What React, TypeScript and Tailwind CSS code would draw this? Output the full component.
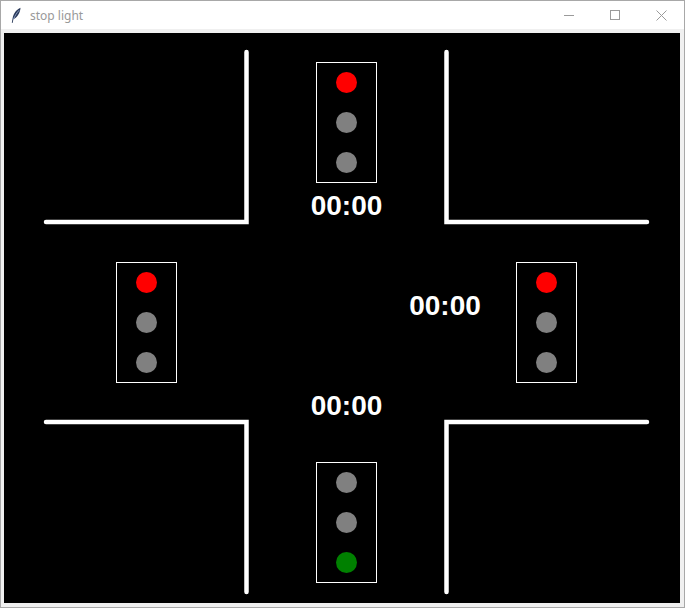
import React from "react";

const Light = ({ x, y, colors }: { x: number; y: number; colors: string[] }) => (
  <g>
    <rect x={x + 0.5} y={y + 0.5} width={60} height={120} fill="none" stroke="#ffffff" strokeWidth={1} />
    {colors.map((c, i) => (
      <circle key={i} cx={x + 30.5} cy={y + 20.5 + i * 40} r={10.5} fill={c} />
    ))}
  </g>
);

const Timer = ({ x, y }: { x: number; y: number }) => (
  <text
    x={x}
    y={y}
    textAnchor="middle"
    fill="#ffffff"
    fontFamily="'Liberation Sans', Arial, sans-serif"
    fontWeight="bold"
    fontSize="28"
  >
    00:00
  </text>
);

export default function App() {
  const R = "#ff0000";
  const G = "#808080";
  const GR = "#008000";
  return (
    <div className="w-[685px] h-[608px] flex flex-col bg-[#f0f0f0] border border-[#a8a8a8] box-border overflow-hidden">
      <div className="h-[28px] bg-white flex items-center shrink-0">
        <div className="w-[29px] flex items-center justify-center pl-[1px]">
          <svg width="12" height="17" viewBox="0 0 12 17">
            <path d="M10.5 0.8 C6.5 2.5 3.5 6.5 2.6 11.2 L1.8 15.8 L2.6 15.9 L3.4 12.3 C7.2 10.4 10.2 6.2 10.5 0.8 Z" fill="#2a3a5a" />
            <path d="M9.2 3.2 C6.8 5.8 4.8 9 3.6 12" stroke="#9fb3d9" strokeWidth="0.8" fill="none" />
          </svg>
        </div>
        <span className="text-[12px] text-[#999999] font-['Segoe_UI','Noto_Sans',sans-serif] leading-none mt-[1px]">stop light</span>
        <div className="ml-auto flex h-full">
          <div className="w-[46px] h-full flex items-center justify-center">
            <div className="w-[10px] h-px bg-[#9a9a9a]" />
          </div>
          <div className="w-[46px] h-full flex items-center justify-center">
            <div className="w-[10px] h-[10px] border border-[#9a9a9a]" />
          </div>
          <div className="w-[46px] h-full flex items-center justify-center">
            <svg width="11" height="11" viewBox="0 0 11 11">
              <path d="M0.5 0.5 L10.5 10.5 M10.5 0.5 L0.5 10.5" stroke="#9a9a9a" strokeWidth="1" />
            </svg>
          </div>
        </div>
      </div>
      <div className="flex-1 pl-[3px] pr-[4px] pt-[4px] pb-[4px]">
        <div className="w-[676px] h-[570px] bg-black">
          <svg width="676" height="570" viewBox="0 0 676 570" className="block">
            <g stroke="#ffffff" strokeWidth={4.5} strokeLinecap="round" strokeLinejoin="miter" fill="none">
              <path d="M42 189 L242.5 189 L242.5 19" />
              <path d="M442.5 19 L442.5 189 L643 189" />
              <path d="M42 389 L242.5 389 L242.5 559" />
              <path d="M643 389 L442.5 389 L442.5 559" />
            </g>
            <Light x={312} y={29} colors={[R, G, G]} />
            <Light x={112} y={229} colors={[R, G, G]} />
            <Light x={512} y={229} colors={[R, G, G]} />
            <Light x={312} y={429} colors={[G, G, GR]} />
            <Timer x={342.5} y={182} />
            <Timer x={441} y={282} />
            <Timer x={342.5} y={382} />
          </svg>
        </div>
      </div>
    </div>
  );
}
